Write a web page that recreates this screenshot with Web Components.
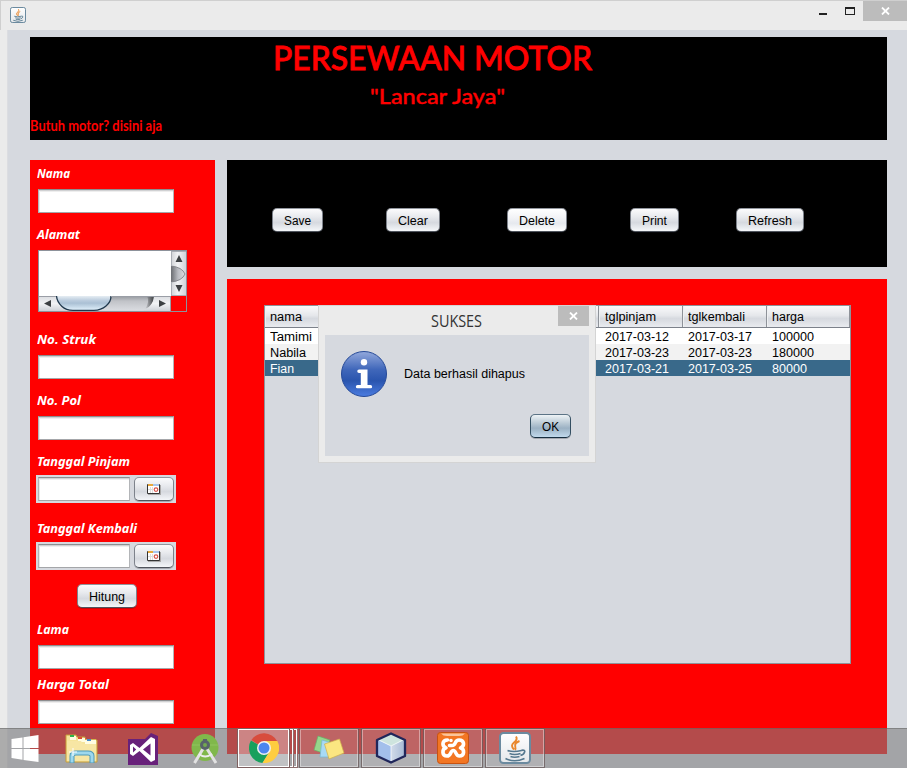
<!DOCTYPE html>
<html lang="id">
<head>
<meta charset="utf-8">
<title>Persewaan Motor</title>
<style>
html,body{margin:0;padding:0}
body{width:907px;height:768px;overflow:hidden;background:#d6d9df;font:12.5px/16px "Liberation Sans",Arial,sans-serif;color:#000}
</style>
</head>
<body>
<rental-app></rental-app>
<script>
const define=(name,html,after)=>customElements.define(name,class extends HTMLElement{
  connectedCallback(){
    if(this.shadowRoot)return;
    const t=document.createElement('template');
    t.innerHTML=html;
    this.attachShadow({mode:'open'}).append(t.content.cloneNode(true));
    if(after)after(this,this.shadowRoot);
  }
});

/* Single line of text stretched to the width given in its w attribute */
define('fit-text',`<style>:host{display:block;white-space:nowrap}span{display:inline-block;transform-origin:0 50%}</style><span><slot></slot></span>`,(el,root)=>{
  const w=+el.getAttribute('w'),s=root.querySelector('span');
  el.style.width=w+'px';
  const n=s.getBoundingClientRect().width;
  if(n)s.style.transform='scaleX('+w/n+')';
});

/* Nimbus style push button */
define('nb-button',`<style>
:host{display:flex;box-sizing:border-box;height:24px;padding-top:2px;line-height:18px;align-items:center;justify-content:center;border:1px solid #858a94;border-color:#92969e #7d828b #4f545c;border-radius:5px;background:linear-gradient(#fbfbfc,#e8eaee 35%,#d6d9df 62%,#f4f6f9);box-shadow:0 1px 0 rgba(20,25,35,.25);flex:none}
:host([hot]){background:linear-gradient(#fff,#f2f3f6 40%,#e6e9ee 65%,#fff)}
:host([primary]){border-color:#5c7486 #344f62 #172e40;background:linear-gradient(#eef3f6,#bdccd7 35%,#9bb1c3 60%,#c1d9ec)}
</style><slot></slot>`);

define('text-field',`<style>:host{display:block;box-sizing:border-box;width:136px;height:24px;background:#fff;border:1px solid #b3b5b8;border-top-color:#8d8e90;border-bottom-color:#a4a6a9;box-shadow:inset 0 1px #d0d1d3,inset 0 2px #eee,inset 1px 0 #e8e8e8}</style>`);

define('form-row',`<style>
:host{display:block}
.l{box-sizing:border-box;height:16px;padding-top:1px;margin-left:7px;font:italic 700 12.5px/16px "Noto Sans","Open Sans",sans-serif;color:#fff}
.c{margin:8px 0 0 8px}
:host([date]) .c{margin:6px 0 0 6px}
</style><div class="l"><fit-text></fit-text></div><div class="c"><slot></slot></div>`,(el,root)=>{
  const f=document.createElement('fit-text');
  f.setAttribute('w',el.getAttribute('w'));f.textContent=el.getAttribute('label');
  root.querySelector('fit-text').replaceWith(f);
});

define('date-field',`<style>
:host{display:flex;box-sizing:border-box;width:140px;height:28px;padding:2px;gap:4px;background:#d6d9df}
text-field{width:92px}nb-button{width:40px}
svg{display:block;margin-top:-2px}
</style><text-field></text-field><nb-button><svg width="14" height="12" viewBox="0 0 14 12"><path d="M1 2h13v10H1z" fill="#aaa"/><path d="M.5 1.5h12v9H.5z" fill="#fff" stroke="#333"/><path d="M1 1h5v2H1z" fill="#e9a83b"/><path d="M6 1h6v2H6z" fill="#a8c7ef"/><path d="M3.5 4v6M5.500 4v6M1 6.500h5" stroke="#ddd"/><circle cx="9" cy="6.600" r="1.800" fill="none" stroke="#d9534a" stroke-width="1.200"/></svg></nb-button>`);

define('scroll-area',`<style>
:host{display:grid;box-sizing:border-box;width:149px;height:62px;border:1px solid #8d929b;grid-template:45px 15px / 132px 15px}
.t{background:#fff}svg{display:block}
</style><div class="t"></div>
<svg width="15" height="45"><defs><linearGradient id="g"><stop offset="0" stop-color="#cfd1d5"/><stop offset=".45" stop-color="#f2f3f5"/><stop offset="1" stop-color="#cfd2d8"/></linearGradient><linearGradient id="k"><stop offset="0" stop-color="#6a6c71"/><stop offset=".5" stop-color="#b9bbc1"/><stop offset="1" stop-color="#dcdee3"/></linearGradient></defs><path fill="url(#g)" d="M0 0h15v45H0z"/><path fill="url(#k)" stroke="#77797f" stroke-width=".8" d="M0 15Q11 16 14 23Q11 30 0 31z"/><path d="M0 .5h15M0 44.5h15M.5 0v15M.5 31v14" stroke="#aaaeb5"/><path fill="#3d4043" d="M4.500 11L8 4l3.500 7zM4.500 34h7L8 41z"/></svg>
<svg width="132" height="15"><defs><linearGradient id="h" x2="0" y2="1"><stop offset="0" stop-color="#dadce0"/><stop offset=".5" stop-color="#f2f3f5"/><stop offset="1" stop-color="#ced1d7"/></linearGradient><linearGradient id="m" x2="0" y2="1"><stop offset="0" stop-color="#95989e"/><stop offset=".35" stop-color="#c1c3c8"/><stop offset="1" stop-color="#dadce1"/></linearGradient><linearGradient id="b" x2="0" y2="1"><stop offset="0" stop-color="#e6edf3"/><stop offset=".3" stop-color="#bccdde"/><stop offset=".5" stop-color="#aac0d4"/><stop offset="1" stop-color="#e1f1fc"/></linearGradient><linearGradient id="e"><stop offset="0" stop-color="#3f4144" stop-opacity="0"/><stop offset="1" stop-color="#3f4144"/></linearGradient></defs><path fill="url(#h)" d="M0 0h132v15H0z"/><path fill="url(#m)" d="M17 0h98Q113 12 104 14.500H30Q19 12 17 0z"/><path fill="url(#e)" d="M108 0h7Q114 10 106 13Q111 6 108 0z"/><path fill="url(#b)" stroke="#20384d" stroke-width="1.300" d="M17.500 0Q18 6 23 10.500Q27 14.300 34 14.300H55Q62 14.300 67 10Q72 6 72 0"/><path d="M0 .5h17M72 .5h60M131.500 0v15" stroke="#9a9ea6"/><path fill="#3d4043" d="M5 7.500L12 4v7zM127 7.500L120 4v7z"/></svg>
<div></div>`);

define('info-icon',`<style>:host{display:block;width:46px;height:46px}svg{display:block}</style><svg width="46" height="46" viewBox="0 0 46 46"><defs><linearGradient id="a" x2="0" y2="1"><stop offset="0" stop-color="#93a9dc"/><stop offset=".4" stop-color="#4067ba"/><stop offset=".65" stop-color="#2a55ae"/><stop offset="1" stop-color="#4b7ce0"/></linearGradient></defs><circle cx="23" cy="23" r="22.500" fill="url(#a)" stroke="#264a98"/><circle cx="23" cy="11.200" r="3.200" fill="#fff"/><path d="M18 18.500h8.500v15.500h3a1.600 1.600 0 0 1 0 3.300h-13a1.600 1.600 0 0 1 0-3.300h3.300V22H18a1.700 1.700 0 0 1 0-3.500z" fill="#fff"/></svg>`);

define('message-dialog',`<style>
:host{display:grid;box-sizing:border-box;width:278px;height:158px;border:1px solid #d4d4d4;background:#ebebeb;grid-template-rows:29px 121px;padding:0 6px}
header{display:flex}
.t{margin-left:106px;padding-top:4px;font:16px/22px "Open Sans","Noto Sans",sans-serif;color:#333}
.x{margin-left:76px;width:31px;height:20px;background:#bcbcbc;display:grid;place-items:center}
main{background:#d6d9df;display:flex;flex-direction:column}
.r{display:flex;gap:17px;margin:16px 0 0 16px;align-items:center}
nb-button{width:41px;margin:17px 0 0 205px}
</style><header><fit-text class="t" w="51">SUKSES</fit-text><div class="x"><svg width="9" height="8"><path d="M1 .5l7 7M8 .5l-7 7" stroke="#fff" stroke-width="1.800"/></svg></div></header>
<main><div class="r"><info-icon></info-icon><fit-text w="121">Data berhasil dihapus</fit-text></div><nb-button primary><fit-text w="17">OK</fit-text></nb-button></main>`);

define('data-table',`<style>
:host{display:block;box-sizing:border-box;width:587px;height:359px;border:1px solid #8f939a;background:#d6d9df}
.g{display:grid;grid-template-columns:84px 84px 83px 83px 84px 84px 83px}
.h{height:22px;box-sizing:border-box;border-bottom:1px solid #7c818a;background:linear-gradient(#fafafb,#e5e7eb 45%,#d6d9df 60%,#e9ebef);line-height:23px}
.h span{height:21px;border-right:1px solid #8e9299;box-shadow:inset 1px 0 #eef0f2}
span{box-sizing:border-box;padding-left:5px;height:16px;white-space:nowrap}
span:nth-child(5){padding-left:6px}
.r{background:#fff;height:16px;line-height:19px}.r.o{background:#f2f2f2}.r.s{background:#39698a;color:#fff}
</style><div class="g h"></div>`,(el,root)=>{
  const cell=(t,w)=>'<span>'+(t?`<fit-text w="${w}">${t}</fit-text>`:'')+'</span>';
  const line=(v,w)=>cell(v[0],w[0])+cell()+cell()+cell()+cell(v[1],w[1])+cell(v[2],w[2])+cell(v[3],w[3]);
  root.querySelector('.h').innerHTML=line(['nama','tglpinjam','tglkembali','harga'],[32,51,57,32]);
  [['Tamimi','2017-03-12','2017-03-17','100000',42,42],['Nabila','2017-03-23','2017-03-23','180000',36,42],['Fian','2017-03-21','2017-03-25','80000',24,35]].forEach((r,i)=>{
    const d=document.createElement('div');d.className='g r '+['','o','s'][i];
    d.innerHTML=line(r,[r[4],64,64,r[5]]);root.append(d);
  });
});

define('java-icon',`<style>:host{display:block}svg{display:block;width:100%;height:100%}</style><svg viewBox="0 0 32 32"><defs><linearGradient id="j" x2="0" y2="1"><stop offset="0" stop-color="#fff"/><stop offset="1" stop-color="#e4e7ea"/></linearGradient></defs><rect x="1" y="1" width="30" height="30" rx="3.500" fill="url(#j)" stroke="#6b8a9f" stroke-width="2"/><path d="M17 4.500q2 3-2 6t0 7M20.500 9q-5 2-4.300 5t-.2 4" fill="none" stroke="#e9872c" stroke-width="1.900"/><path d="M8.500 18.500q6 2 14 0M10.500 21.500q5 2 11 0M11.500 24.500q4 1.500 9 0M6.500 26.500q9 4.500 19 0M22.500 18.300q4-.8 3 2t-4 3" fill="none" stroke="#55788e" stroke-width="1.700"/></svg>`);

define('task-button',`<style>
:host{display:grid;box-sizing:border-box;width:60px;height:40px;place-items:center;border:1px solid rgba(100,85,85,.75);box-shadow:inset 0 0 0 1px rgba(255,255,255,.4);background:rgba(255,255,255,.14)}
:host([active]){width:53px;background:rgba(255,255,255,.32);border-color:#7d6060;box-shadow:inset 0 0 0 1px #fff}
</style><slot></slot>`);

define('task-bar',`<style>
:host{display:flex;box-sizing:border-box;height:40px;background:rgba(128,128,128,.59);border-top:1px solid rgba(90,90,90,.45);align-items:center}
svg{display:block;flex:none}
.s{margin-left:11px}.e{margin-left:26px}.v{margin-left:29px}.n{margin-left:33px}
.c{margin-left:16px;display:flex;margin-top:-1px}
i{width:4px;box-sizing:border-box;height:40px;border:solid #8d7070;border-width:1px 1px 1px 0;box-shadow:inset -1px 0 #fff,inset 0 1px #fff,inset 0 -1px #fff}
.b{display:flex;gap:2px;margin:-1px 0 0 1px}
java-icon{width:32px;height:32px}
</style>
<svg class="s" width="28" height="28" viewBox="0 0 28 28"><path fill="#fff" d="M.5 4l11-1.500V13H.5zM12.500 2.300L27.500 0v13h-15zM.5 14h11v10.700L.5 23zM12.500 14h15v13l-15-2z"/></svg>
<svg class="e" width="34" height="32" viewBox="0 0 34 32"><path fill="#e6c965" d="M2 4h9l2 2h18v22H2z"/><path fill="#f5e49a" stroke="#c79d38" d="M1 5V2h10l1 2h8v3h12v22H1z"/><path fill="#fffce1" d="M5 3h6v4H5zM13 5h7v4h-7zM20 7h11v4H20z"/><path fill="#2db54a" d="M5 2h4v2H5z"/><path fill="#dc5132" d="M13 4h4v2h-4z"/><path fill="#468bcb" d="M22 6h4v2h-4z"/><path fill="#f7e6a4" d="M2 8h14l2 3h13v17H2z"/><path d="M7 30V23q0-3 4-3h12q4 0 4 3v7" fill="none" stroke="#4e9ab9" stroke-width="5"/><path d="M7 29.500V23q0-3 4-3h12q4 0 4 3v6.500" fill="none" stroke="#9ed8ed" stroke-width="3"/><path d="M8 15v8M4 19h8" stroke="#fff"/></svg>
<svg class="v" width="30" height="32" viewBox="0 0 30 32"><path fill="#68217a" d="M0 6h17l6-6 7 3v29H0z"/><path fill="#fff" fill-rule="evenodd" d="M2 12l3-2 6.500 5L23 4l4 2v21l-4 2-11.500-11L5 23l-3-2zM5 13.500v6l3.200-3zM22.500 10.500L15 16.500l7.500 6z"/></svg>
<svg class="n" width="30" height="32" viewBox="0 0 30 32"><circle cx="14" cy="14.500" r="13.500" fill="#80b84b"/><path d="M1 12h26" stroke="#94c865" stroke-width=".8"/><path d="M12.500 15L3.500 30M15.500 15l9.500 15" stroke="#e2e2e2" stroke-width="3"/><path d="M8 21q6 5 13 0" fill="none" stroke="#ececec" stroke-width="2"/><circle cx="14" cy="12" r="3.500" fill="#73a950" stroke="#58636a" stroke-width="3"/><path d="M14 6v3" stroke="#58636a" stroke-width="4"/></svg>
<div class="c"><task-button active><svg width="30" height="30" viewBox="0 0 30 30"><path fill="#d84c3d" d="M15 15L2.400 7A15 15 0 0 1 28 8z"/><path fill="#17a05d" d="M15 15L2 7.500A15 15 0 0 0 13.500 30l7-11z"/><path fill="#fecd40" d="M15 8h13.300A15 15 0 0 1 13.500 30l7-11.500z"/><circle cx="15" cy="15" r="7" fill="#f2f2f2"/><circle cx="15" cy="15" r="5.500" fill="#4c86ee"/></svg></task-button><i></i><i></i></div>
<div class="b">
<task-button><svg width="32" height="26" viewBox="0 0 32 26"><path fill="#96d78b" stroke="#69ad69" stroke-width=".7" d="M5 1l12 4-4 14-12-4z"/><path fill="#a8daf5" stroke="#76b7d3" stroke-width=".7" d="M9 5l10 3-2 14-10 0z"/><path fill="#fbe681" stroke="#cfb04b" stroke-width=".7" d="M11.500 9l15-5 4.500 14-15 6z"/></svg></task-button>
<task-button><svg width="32" height="32" viewBox="0 0 32 32"><defs><linearGradient id="r"><stop offset="0" stop-color="#fff"/><stop offset="1" stop-color="#a5b8d4"/></linearGradient></defs><path fill="url(#r)" d="M16 1l14 7v16l-14 7-14-7V8z"/><path fill="#cee4de" d="M16 2l13 6-13 6L3 8z"/><path fill="#a3bfeb" d="M3 8l13 6v16L3 24z"/><path fill="none" stroke="#fff" stroke-opacity=".7" d="M4 8l12 6 12-6M16 14v16"/><path fill="none" stroke="#20265a" stroke-width="2.300" stroke-linejoin="round" d="M16 1.500l14 6.500v16l-14 6.500L2 24V8z"/></svg></task-button>
<task-button><svg width="32" height="32" viewBox="0 0 32 32"><rect x=".5" y=".5" width="31" height="31" rx="3" fill="#f37623" stroke="#c65211"/><path d="M4 1.500h24q-2 2.500-6 2.500H10Q6 4 4 1.500z" fill="#fac59c"/><path fill="none" stroke="#fff" stroke-width="3.600" stroke-linecap="round" stroke-linejoin="round" d="M10.500 8C5 8 4.500 14 9 15.800C4.500 17.500 5 24 10 24C14.500 24 13 18.500 16.300 18.500C19.500 18.500 18 24 22.500 24C27.500 24 28 17.500 23.500 15.800C28 14 27.500 8 22 8C17 8 19.500 13.500 15 13.500L12.500 13.500M14 8.500L14 8.500"/></svg></task-button>
<task-button><java-icon></java-icon></task-button>
</div>`);

define('window-title',`<style>
:host{display:flex;box-sizing:border-box;height:30px;background:#ebebeb;border-top:1px solid #cfcfcf;border-left:1px solid #cfcfcf}
java-icon{width:16px;height:16px;margin:6px 0 0 9px}
.w{margin-left:auto;display:flex}
.m{width:8px;height:2px;background:#222;margin:12px 18px 0 0}
.q{box-sizing:border-box;width:10px;height:8px;border:1px solid #222;border-top-width:2px;margin:6px 8px 0 0}
.x{width:44px;height:20px;background:#bcbcbc;display:grid;place-items:center}
</style><java-icon></java-icon><div class="w"><div class="m"></div><div class="q"></div><div class="x"><svg width="9" height="8"><path d="M1 .5l7 7M8 .5l-7 7" stroke="#fff" stroke-width="1.800"/></svg></div></div>`);

define('page-banner',`<style>
:host{display:block;grid-column:1/3;height:103px;background:#000;color:#f00;font-family:Lato,"Open Sans",sans-serif}
.a{font-size:33px;font-weight:500;line-height:41px;height:42px;margin-left:243px;-webkit-text-stroke:.8px #f00}
.b{font-size:21px;font-weight:500;line-height:34px;margin-left:340px;-webkit-text-stroke:.4px #f00}
.c{font-size:16px;font-weight:700;line-height:24px}
</style><fit-text class="a" w="319">PERSEWAAN MOTOR</fit-text><fit-text class="b" w="135">"Lancar Jaya"</fit-text><fit-text class="c" w="132">Butuh motor? disini aja</fit-text>`);

define('rental-form',`<style>
:host{display:flex;flex-direction:column;gap:13px;background:#f00;padding-top:5px;box-sizing:border-box}
nb-button{width:60px;margin:1px 0 0 47px}
</style>
<form-row label="Nama" w="33"><text-field></text-field></form-row>
<form-row label="Alamat" w="43"><scroll-area></scroll-area></form-row>
<form-row label="No. Struk" w="59" style="margin-top:6px"><text-field></text-field></form-row>
<form-row label="No. Pol" w="44"><text-field></text-field></form-row>
<form-row label="Tanggal Pinjam" w="93" date><date-field></date-field></form-row>
<form-row label="Tanggal Kembali" w="100" date style="margin-top:4px"><date-field></date-field></form-row>
<nb-button><fit-text w="36">Hitung</fit-text></nb-button>
<form-row label="Lama" w="32"><text-field></text-field></form-row>
<form-row label="Harga Total" w="72" style="margin-top:-6px"><text-field></text-field></form-row>`);

define('action-bar',`<style>
:host{display:flex;background:#000;height:107px;box-sizing:border-box;padding:48px 0 0 45px}
</style>
<nb-button style="width:51px"><fit-text w="27">Save</fit-text></nb-button>
<nb-button style="width:54px;margin-left:63px"><fit-text w="30">Clear</fit-text></nb-button>
<nb-button hot style="width:60px;margin-left:67px"><fit-text w="36">Delete</fit-text></nb-button>
<nb-button style="width:49px;margin-left:63px"><fit-text w="25">Print</fit-text></nb-button>
<nb-button style="width:68px;margin-left:57px"><fit-text w="44">Refresh</fit-text></nb-button>`);

define('rental-app',`<style>
:host{display:block;position:relative;width:907px;height:768px;overflow:hidden;background:#d6d9df}
.body{display:grid;box-sizing:border-box;height:738px;border-left:7px solid #ebebeb;box-shadow:inset 1px 0 #dcdde1;padding:7px 20px 14px 23px;grid-template:103px 594px / 185px 660px;gap:20px 12px}
.right{display:grid;grid-template-rows:107px 475px;gap:12px}
.panel{background:#f00;padding:26px 0 0 37px}
message-dialog{position:absolute;left:318px;top:305px}
task-bar{position:absolute;left:0;top:728px;width:907px}
</style>
<window-title></window-title>
<div class="body"><page-banner></page-banner><rental-form></rental-form>
<div class="right"><action-bar></action-bar><div class="panel"><data-table></data-table></div></div></div>
<message-dialog></message-dialog><task-bar></task-bar>`);
</script>
</body>
</html>
